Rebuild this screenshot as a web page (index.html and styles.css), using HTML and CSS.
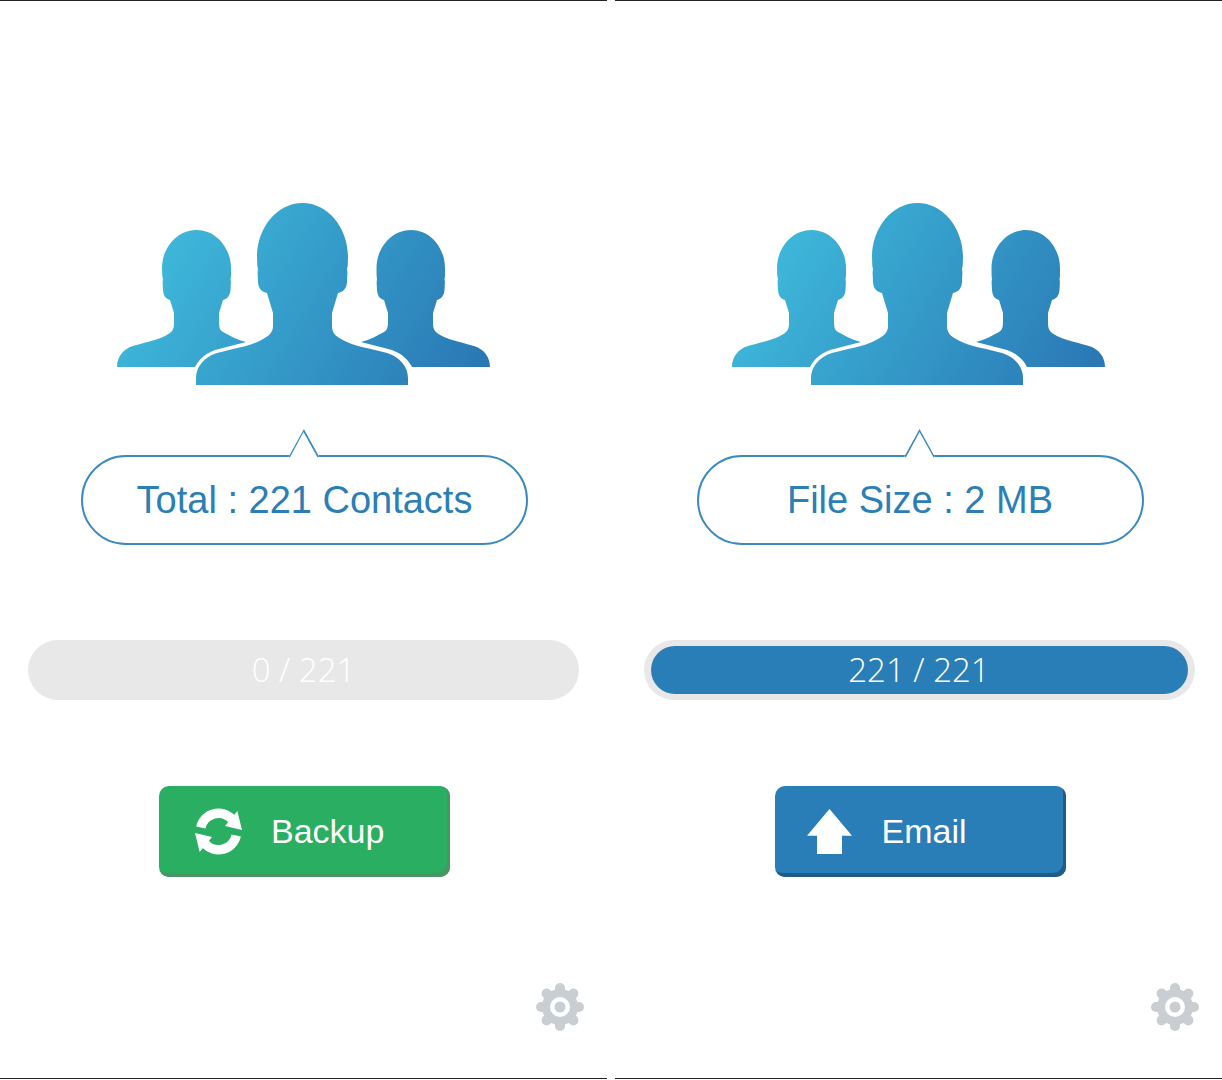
FILE: index.html
```html
<!DOCTYPE html>
<html lang="en">
<head>
    <meta charset="UTF-8">
    <meta name="viewport" content="width=device-width, initial-scale=1.0">
    <title>Contacts Backup</title>
    <link rel="stylesheet" href="styles.css">
</head>
<body>
    <svg class="defs" width="0" height="0">
        <defs>
            <linearGradient id="people-fill" gradientUnits="userSpaceOnUse" x1="50" y1="30" x2="335" y2="200">
                <stop offset="0" stop-color="#3eb8da"/>
                <stop offset="1" stop-color="#2a79b5"/>
            </linearGradient>
            <symbol id="people" viewBox="0 0 374 184">
                <path fill="url(#people-fill)" d="M79.5 28C60 28 45 46 45 66L45.300 74L46 77L45.600 80L46 88C46.500 94 49 97 53 98L57 111L57 122C57 128 54 131 48 134C38 139 25 141 16 144C6 147 0 155 0 165L78 165C81 159 87 152 98 148L129 140C120 138 112 133 106 130C102 128 102 123 102 118L102 111L106 98C110 97 113 94 113.500 88L113.900 80L113.500 77L114 74L114 66C114 46 99 28 79.500 28Z"/>
                <path fill="url(#people-fill)" d="M294 28C274.500 28 259.500 46 259.500 66L259.600 74L260 77L259.600 80L260 88C260.500 94 263 97 267 98L271 111L271 118C271 123 271 128 267 130C261 133 253 138 244 140L275 148C286 152 292 159 295 165L373 165C373 155 367 147 357 144C348 141 335 139 325 134C319 131 316 128 316 122L316 111L320 98C324 97 327 94 327.500 88L327.900 80L327.500 77L328 74L328 66C328 46 313.500 28 294 28Z"/>
                <path fill="url(#people-fill)" d="M185.500 1C160 1 140 26 140 55L140.300 64L141 67L140.600 70L141 80C141.500 87 145 90 150 91L156 111L156 124C156 130 152 134 146 137C136 143 125 145 116 147L100 151C87 155 79 165 79 176L79 183L291 183L291 176C291 165 283 155 270 151L254 147C245 145 234 143 224 137C218 134 215 130 215 124L215 111L221 91C226 90 229.500 87 230 80L230.400 70L230 67L230.700 64L231 55C231 26 211 1 185.500 1Z"/>
            </symbol>
            <symbol id="gear" viewBox="0 0 48 48">
                <g stroke="#c9ced2" stroke-width="10" stroke-linecap="round">
                    <line x1="24" y1="24" x2="24" y2="5"/>
                    <line x1="24" y1="24" x2="24" y2="43"/>
                    <line x1="24" y1="24" x2="5" y2="24"/>
                    <line x1="24" y1="24" x2="43" y2="24"/>
                    <line x1="24" y1="24" x2="10.600" y2="10.600"/>
                    <line x1="24" y1="24" x2="37.400" y2="10.600"/>
                    <line x1="24" y1="24" x2="10.600" y2="37.400"/>
                    <line x1="24" y1="24" x2="37.400" y2="37.400"/>
                </g>
                <circle cx="24" cy="24" r="18" fill="#c9ced2"/>
                <circle cx="24" cy="24" r="10" fill="#fff"/>
                <circle cx="24" cy="24" r="5.500" fill="#c9ced2"/>
            </symbol>
        </defs>
    </svg>

    <div class="screens">
        <div class="screen">
            <svg class="people"><use href="#people"/></svg>
            <div class="bubble">
                <svg class="bubble-tail" viewBox="0 0 32 29"><path d="M1 28L15.500 1L30.500 28"/></svg>
                Total : 221 Contacts
            </div>
            <div class="progress"><span class="progress-label">0 / 221</span></div>
            <div class="action action-green">
                <svg class="action-icon" viewBox="0 0 47 47">
                    <g>
                        <path d="M5.800 19.500A18 18 0 0 1 37 11.500" fill="none" stroke="#fff" stroke-width="9.500"/>
                        <polygon points="47,22 42.300,3 30,18" fill="#fff"/>
                    </g>
                    <g transform="rotate(180 23.500 23.500)">
                        <path d="M5.800 19.500A18 18 0 0 1 37 11.500" fill="none" stroke="#fff" stroke-width="9.500"/>
                        <polygon points="47,22 42.300,3 30,18" fill="#fff"/>
                    </g>
                </svg>
                <span>Backup</span>
            </div>
            <svg class="gear"><use href="#gear"/></svg>
        </div>

        <div class="screen">
            <svg class="people"><use href="#people"/></svg>
            <div class="bubble">
                <svg class="bubble-tail" viewBox="0 0 32 29"><path d="M1 28L15.500 1L30.500 28"/></svg>
                File Size : 2 MB
            </div>
            <div class="progress progress-done">
                <div class="progress-fill"><span class="progress-label">221 / 221</span></div>
            </div>
            <div class="action action-blue">
                <svg class="action-icon action-icon-up" viewBox="0 0 45 45">
                    <polygon points="22.500,0 45,26.700 35,26.700 35,45 10,45 10,26.700 0,26.700" fill="#fff"/>
                </svg>
                <span>Email</span>
            </div>
            <svg class="gear"><use href="#gear"/></svg>
        </div>
    </div>
</body>
</html>
```

FILE: styles.css
```css
* {
    box-sizing: border-box;
}
body {
    margin: 0;
    background: #fff;
    font-family: 'Liberation Sans', Arial, sans-serif;
}
.defs {
    position: absolute;
}
.screens {
    display: flex;
    justify-content: space-between;
    height: 1079px;
}
.screen {
    width: 607px;
    display: flex;
    flex-direction: column;
    align-items: center;
    border-top: 1px solid #222;
    border-bottom: 1px solid #222;
}
.screen + .screen {
    padding-left: 1px;
}
.people {
    width: 374px;
    height: 184px;
    margin-top: 201px;
}
.bubble {
    position: relative;
    width: 447px;
    height: 90px;
    margin-top: 69px;
    margin-left: 2px;
    display: flex;
    align-items: center;
    justify-content: center;
    border: 2px solid #3c8bc0;
    border-radius: 45px;
    background: #fff;
    color: #2c7eb6;
    font-size: 38px;
}
.bubble-tail {
    position: absolute;
    top: -28px;
    left: 205px;
    width: 32px;
    height: 29px;
    background: #fff;
    clip-path: polygon(0 100%, 50% 0, 100% 100%);
}
.bubble-tail path {
    fill: none;
    stroke: #3c8bc0;
    stroke-width: 2;
}
.progress {
    width: 551px;
    height: 60px;
    margin-top: 95px;
    display: flex;
    align-items: center;
    justify-content: center;
    border-radius: 30px;
    background: #e8e8e8;
}
.progress-done {
    padding: 6px 7px;
}
.progress-fill {
    width: 100%;
    height: 100%;
    display: flex;
    align-items: center;
    justify-content: center;
    border-radius: 24px;
    background: #2a7eb8;
}
.progress-label {
    color: #fff;
    font-family: 'Open Sans', sans-serif;
    font-weight: 300;
    font-size: 33px;
    padding-bottom: 2px;
}
.action {
    width: 291px;
    height: 91px;
    margin-top: 86px;
    margin-left: 2px;
    display: flex;
    align-items: center;
    padding-left: 36px;
    gap: 29px;
    border-radius: 10px;
    color: #fff;
    font-size: 34px;
}
.action-green {
    background: #29ae62;
    box-shadow: inset -3px -4px 0 #4a9565;
}
.action-blue {
    background: #2a7eb8;
    box-shadow: inset -3px -4px 0 #1f5b86;
    padding-left: 32px;
    gap: 30px;
}
.action-icon {
    width: 47px;
    height: 47px;
}
.action-icon-up {
    width: 45px;
    height: 45px;
}
.gear {
    width: 48px;
    height: 48px;
    align-self: flex-end;
    margin-top: 106px;
    margin-right: 23px;
}
```
